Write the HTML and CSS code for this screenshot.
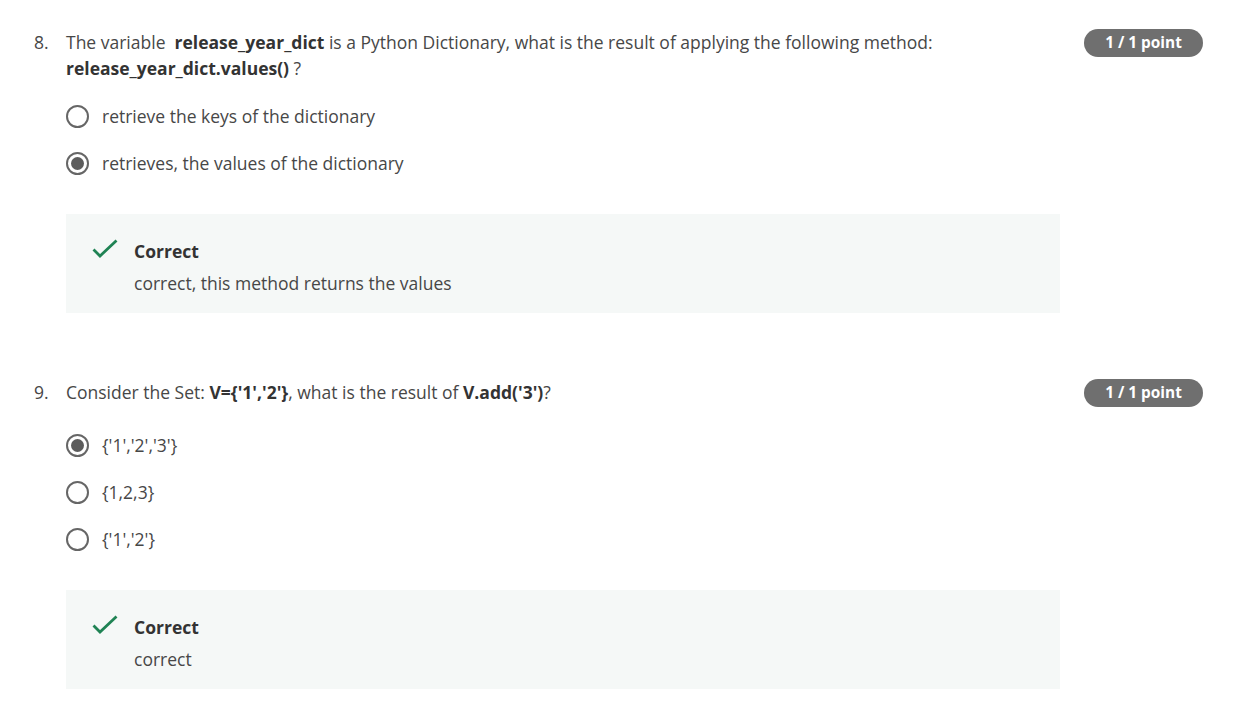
FILE: index.html
```html
<!DOCTYPE html>
<html lang="en">
<head>
<meta charset="utf-8">
<title>Quiz</title>
<link rel="stylesheet" href="styles.css">
</head>
<body>
<div class="page">
  <section class="question q8">
    <div class="num">8.</div>
    <div class="body">
      <div class="prompt">The variable &nbsp;<b>release_year_dict</b> is a Python Dictionary, what is the result of applying the following method:<br><b>release_year_dict.values()</b> ?</div>
      <ul class="options">
        <li class="option"><span class="radio"></span><span>retrieve the keys of the dictionary</span></li>
        <li class="option"><span class="radio checked"></span><span>retrieves, the values of the dictionary</span></li>
      </ul>
      <div class="feedback">
        <svg class="check" width="26" height="20" viewBox="0 0 26 20"><path d="M1.5 10.5 L8 17 L24.5 1.5" fill="none" stroke="#1f8354" stroke-width="2.8"/></svg>
        <div class="fb-text">
          <div class="fb-title">Correct</div>
          <div class="fb-sub">correct, this method returns the values</div>
        </div>
      </div>
    </div>
    <div class="badge">1 / 1 point</div>
  </section>

  <section class="question q9">
    <div class="num">9.</div>
    <div class="body">
      <div class="prompt">Consider the Set: <b>V={'1','2'}</b>, what is the result of <b>V.add('3')</b>?</div>
      <ul class="options">
        <li class="option"><span class="radio checked"></span><span>{'1','2','3'}</span></li>
        <li class="option"><span class="radio"></span><span>{1,2,3}</span></li>
        <li class="option"><span class="radio"></span><span>{'1','2'}</span></li>
      </ul>
      <div class="feedback">
        <svg class="check" width="26" height="20" viewBox="0 0 26 20"><path d="M1.5 10.5 L8 17 L24.5 1.5" fill="none" stroke="#1f8354" stroke-width="2.8"/></svg>
        <div class="fb-text">
          <div class="fb-title">Correct</div>
          <div class="fb-sub">correct</div>
        </div>
      </div>
    </div>
    <div class="badge">1 / 1 point</div>
  </section>
</div>
</body>
</html>
```

FILE: styles.css
```css
* { box-sizing: border-box; }
html, body { margin: 0; padding: 0; background: #fff; }
body {
  font-family: "Open Sans", "Liberation Sans", sans-serif;
  font-size: 17.5px;
  line-height: 26px;
  color: #474747;
}
.page {
  padding: 29px 33px 0 34px;
  display: flex;
  flex-direction: column;
  gap: 66px;
}
.question {
  display: flex;
  align-items: flex-start;
}
.num {
  width: 32px;
  flex: none;
}
.body {
  width: 994px;
  flex: none;
}
.prompt b { font-weight: 700; color: #333; }
.options {
  list-style: none;
  margin: 22px 0 0;
  padding: 0;
  display: flex;
  flex-direction: column;
  gap: 21px;
}
.q9 .options { margin-top: 27px; }
.option {
  display: flex;
  align-items: center;
  gap: 13px;
  height: 26px;
}
.radio {
  width: 23px;
  height: 23px;
  border: 2px solid #666;
  border-radius: 50%;
  flex: none;
  display: flex;
  align-items: center;
  justify-content: center;
}
.radio.checked::after {
  content: "";
  width: 13px;
  height: 13px;
  border-radius: 50%;
  background: #5c5c5c;
}
.feedback {
  margin-top: 38px;
  background: #f5f8f7;
  padding: 24px 20px 17px 26px;
  display: flex;
  align-items: flex-start;
  gap: 16px;
}
.check { margin-top: 1px; flex: none; }
.fb-title { font-weight: 700; color: #333; }
.fb-sub { margin-top: 6px; }
.badge {
  margin-left: 24px;
  margin-top: 0;
  width: 119px;
  height: 28px;
  border-radius: 14px;
  background: #6f6f6f;
  color: #fff;
  font-size: 15.4px;
  font-weight: 700;
  line-height: 28px;
  text-align: center;
  flex: none;
}
```
